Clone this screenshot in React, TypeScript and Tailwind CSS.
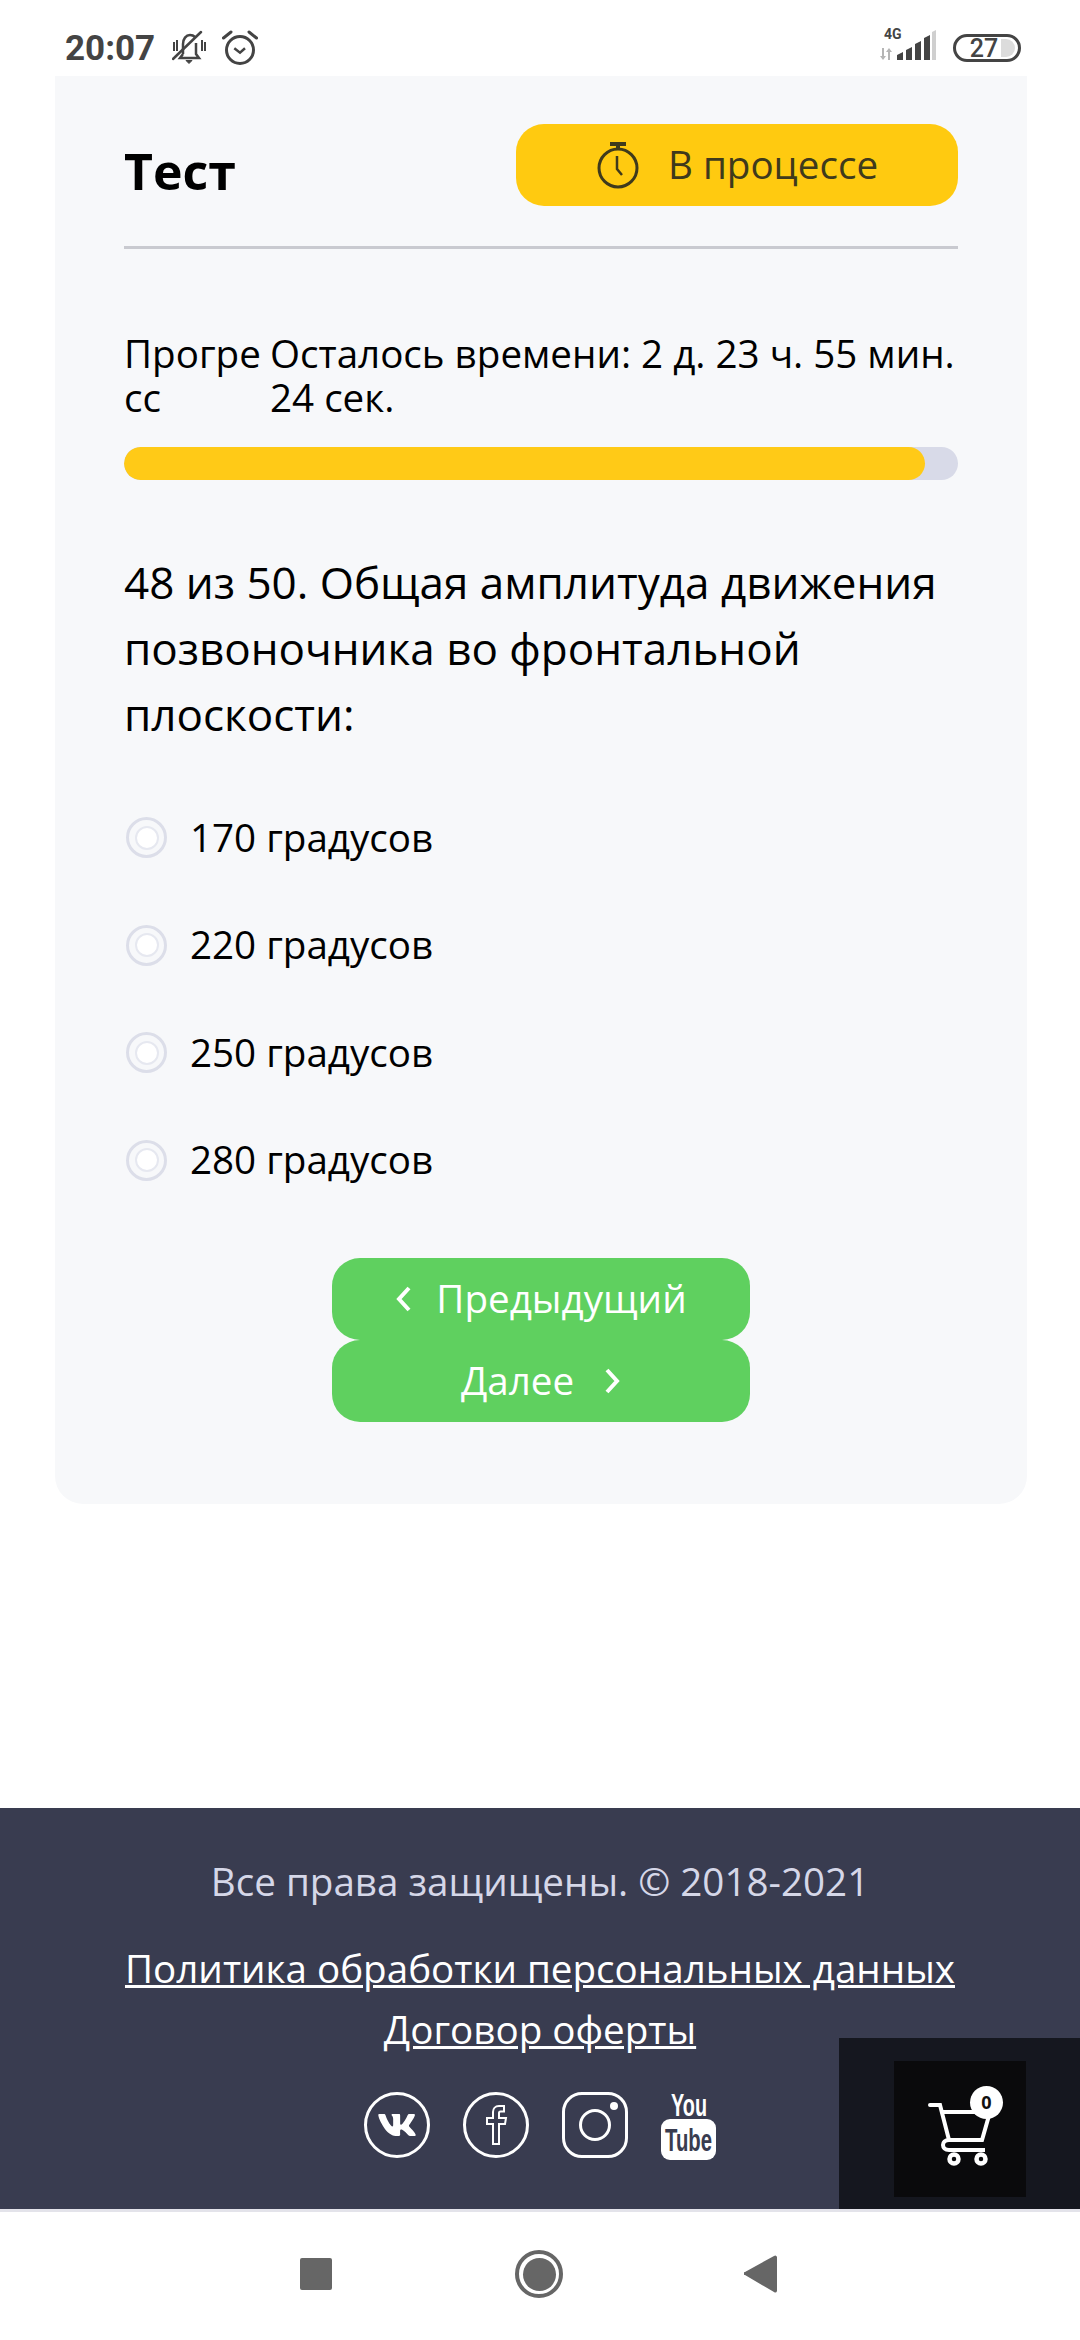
import { FaVk } from "react-icons/fa";

const answers = ["170 градусов", "220 градусов", "250 градусов", "280 градусов"];

function StatusBar() {
  return (
    <div className="h-[76px] flex items-center justify-between pl-[65px] pr-[59px] pt-[20px] bg-white">
      <div className="flex items-center">
        <span className="font-['Roboto'] font-bold text-[35px] leading-none text-[#444]">20:07</span>
        {/* muted bell */}
        <svg className="ml-[17px]" width="36" height="36" viewBox="0 0 36 36" fill="none" stroke="#444" strokeWidth="2.500">
          <path d="M11 24V14c0-5 3-9 7-9 2 0 4 1 5 2M24 13v11l3 4H8l3-4" />
          <path d="M14 30.500h6l-3 3z" fill="#444" strokeWidth="1" />
          <path d="M1 29 29 2" strokeLinecap="round" />
          <path d="M2 12v9M5 10v11M30 10v11M33 12v9" strokeWidth="2" />
        </svg>
        {/* alarm */}
        <svg className="ml-[14px]" width="36" height="36" viewBox="0 0 36 36" fill="none" stroke="#444" strokeWidth="3">
          <circle cx="18" cy="20" r="13.500" />
          <path d="M12.300 18.300 18 22.700l5-4.400" strokeWidth="2.500" />
          <path d="M1.500 8 9 2M34.500 8 27 2" strokeLinecap="round" />
        </svg>
      </div>
      <div className="flex items-center">
        {/* network */}
        <div className="relative w-[60px] h-[40px]">
          <span className="absolute left-[4px] -top-[1px] font-['Roboto'] font-bold text-[14px] leading-none text-[#444]">4G</span>
          <svg className="absolute left-0 top-0" width="60" height="40" viewBox="0 0 60 40">
            <path d="M2 20h2v8h2l-3 4-3-4h2zM8 32h2v-8h2l-3-4-3 4h2z" fill="#b5b5b5" />
            <path d="M17 32v-5l6-3v8zM26 32V22l6-3v13zM35 32V16l6-3v19zM44 32V10l6-3v25z" fill="#444" />
            <path d="M52 32V4l4-2v30z" fill="#cfcfcf" />
          </svg>
        </div>
        {/* battery */}
        <div className="relative ml-[13px] w-[68px] h-[28px] rounded-full border-[3px] border-[#444] flex items-center justify-center">
          <div className="absolute left-[45px] top-[2px] w-[14px] h-[18px] rounded-r-full bg-[#dcdcdc]" />
          <span className="relative -ml-[6px] font-['Roboto'] font-medium text-[25px] leading-none text-[#444]">27</span>
        </div>
      </div>
    </div>
  );
}

function Card() {
  return (
    <div className="ml-[55px] mr-[53px] h-[1428px] bg-[#f7f8fa] rounded-b-[28px] px-[69px] pt-[48px]">
      {/* header */}
      <div className="flex justify-between border-b-[3px] border-[#c9cad0] pb-[40px]">
        <h1 className="h-[82px] font-bold text-[50px] leading-[94px] text-black">Тест</h1>
        <div className="w-[442px] h-[82px] rounded-[28px] bg-[#ffca10] flex items-center justify-center text-[#3f3a1c]">
          <svg width="44" height="48" viewBox="0 0 44 48" fill="none" stroke="#3f3a1c" strokeWidth="3">
            <circle cx="22" cy="27" r="19" />
            <path d="M14 3h16M22 3v5" strokeWidth="4" />
            <path d="M21 15v13l5 6" strokeWidth="2.500" />
          </svg>
          <span className="ml-[28px] text-[38.6px]">В процессе</span>
        </div>
      </div>

      {/* progress */}
      <div className="flex mt-[82px] text-[38.6px] leading-[44px] text-black">
        <div className="w-[146px] break-all">Прогресс</div>
        <div className="flex-1">Осталось времени: 2 д. 23 ч. 55 мин. 24 сек.</div>
      </div>
      <div className="mt-[28px] h-[33px] rounded-full bg-[#d8dae8] overflow-hidden">
        <div className="w-[96%] h-full rounded-full bg-[#ffca17]" />
      </div>

      {/* question */}
      <p className="mt-[69px] text-[44px] leading-[66px] text-black">
        48 из 50. Общая амплитуда движения позвоночника во фронтальной плоскости:
      </p>

      <div className="mt-[37px]">
        {answers.map((a) => (
          <label key={a} className="h-[107.5px] flex items-center text-[38.6px] text-black">
            <span className="ml-[2px] w-[41px] h-[41px] rounded-full border-[3px] border-[#dcdee9] flex items-center justify-center">
              <span className="w-[24px] h-[24px] rounded-full border-[2px] border-[#e6e8f0] bg-white" />
            </span>
            <span className="ml-[23px]">{a}</span>
          </label>
        ))}
      </div>

      {/* nav buttons */}
      <div className="mt-[44px] flex flex-col items-center text-white text-[38.6px]">
        <button className="w-[418px] h-[82px] rounded-[28px] bg-[#5fd05f] flex items-center justify-center">
          <svg width="17" height="28" viewBox="0 0 17 28" fill="none" stroke="#fff" strokeWidth="4">
            <path d="M14 3 4 14l10 11" />
          </svg>
          <span className="ml-[24px]">Предыдущий</span>
        </button>
        <button className="w-[418px] h-[82px] rounded-[28px] bg-[#5fd05f] flex items-center justify-center">
          <span className="mr-[30px]">Далее</span>
          <svg width="17" height="28" viewBox="0 0 17 28" fill="none" stroke="#fff" strokeWidth="4">
            <path d="m3 3 10 11-10 11" />
          </svg>
        </button>
      </div>
    </div>
  );
}

function Socials() {
  return (
    <div className="mt-[30px] flex items-center justify-center gap-[33px] text-white">
      <div className="w-[66px] h-[66px] rounded-full border-[3px] border-white flex items-center justify-center">
        <FaVk size={40} />
      </div>
      <div className="w-[66px] h-[66px] rounded-full border-[3px] border-white flex items-center justify-center">
        <svg width="24" height="40" viewBox="0 0 24 40" fill="none" stroke="#fff" strokeWidth="2">
          <path d="M20 1h-5c-4 0-6 3-6 6v6H3v6h6v20h6V19h6l1-6h-7V8c0-1 .5-1.500 1.500-1.500H20z" />
        </svg>
      </div>
      <div className="relative w-[66px] h-[66px] rounded-[20px] border-[3px] border-white flex items-center justify-center">
        <div className="w-[32px] h-[32px] rounded-full border-[3px] border-white" />
        <div className="absolute right-[7px] top-[7px] w-[8px] h-[8px] rounded-full bg-white" />
      </div>
      <svg className="overflow-visible" width="56" height="70" viewBox="0 0 56 70">
        <text x="28" y="26" textAnchor="middle" textLength="36" lengthAdjust="spacingAndGlyphs" fill="#fff" fontFamily="'Liberation Sans', sans-serif" fontWeight="700" fontSize="31">You</text>
        <rect x="0" y="29" width="55" height="41" rx="9" fill="#fff" />
        <text x="27.500" y="61" textAnchor="middle" textLength="47" lengthAdjust="spacingAndGlyphs" fill="#393c50" fontFamily="'Liberation Sans', sans-serif" fontWeight="700" fontSize="31">Tube</text>
      </svg>
    </div>
  );
}

function Footer() {
  return (
    <div className="relative h-[401px] bg-[#393c50] text-center pt-[49px]">
      <div className="text-[#d5d7e8] text-[38.6px] leading-[48px]">Все права защищены. © 2018-2021</div>
      <div className="mt-[33px] text-white text-[38.6px] leading-[61px] underline">
        <div>Политика обработки персональных данных</div>
        <div>Договор оферты</div>
      </div>
      <Socials />

      {/* floating cart */}
      <div className="absolute right-0 bottom-0 w-[241px] h-[171px] bg-[#15171f]">
        <div className="absolute left-[55px] top-[23px] w-[132px] h-[136px] bg-[#0a0a0c]">
          <svg className="absolute left-0 top-0" width="132" height="136" viewBox="0 0 132 136" fill="none" stroke="#fff" strokeWidth="4">
            <path d="M36 44h10l9 35" strokeLinecap="round" />
            <path d="M47 51h49l-8 28H55" />
            <path d="M55 79c-8 0-8 10 0 10h36" />
            <circle cx="60" cy="98" r="4.500" strokeWidth="4.500" />
            <circle cx="87" cy="98" r="4.500" strokeWidth="4.500" />
          </svg>
          <div className="absolute left-[76px] top-[25px] w-[33px] h-[33px] rounded-full bg-white flex items-center justify-center text-[#111] font-bold text-[18px]">0</div>
        </div>
      </div>
    </div>
  );
}

function NavBar() {
  return (
    <div className="flex-1 bg-white border-t-[3px] border-[#e3e3ea] relative flex items-center">
      <div className="w-full flex items-center pb-[4px]">
        <div className="ml-[300px] w-[32px] h-[32px] rounded-[2px] bg-[#666]" />
        <div className="ml-[183px] w-[48px] h-[48px] rounded-full border-[4px] border-[#666] flex items-center justify-center">
          <div className="w-[33px] h-[33px] rounded-full bg-[#666]" />
        </div>
        <svg className="ml-[181px]" width="34" height="38" viewBox="0 0 34 38">
          <path d="M33 2v34a2 2 0 0 1-3 1L1 20a1.500 1.500 0 0 1 0-3L30 1a2 2 0 0 1 3 1z" fill="#666" />
        </svg>
      </div>
    </div>
  );
}

export default function App() {
  return (
    <div className="w-[1080px] h-[2340px] bg-white flex flex-col font-['Open_Sans',sans-serif] overflow-hidden">
      <StatusBar />
      <Card />
      <div className="h-[304px]" />
      <Footer />
      <NavBar />
    </div>
  );
}
